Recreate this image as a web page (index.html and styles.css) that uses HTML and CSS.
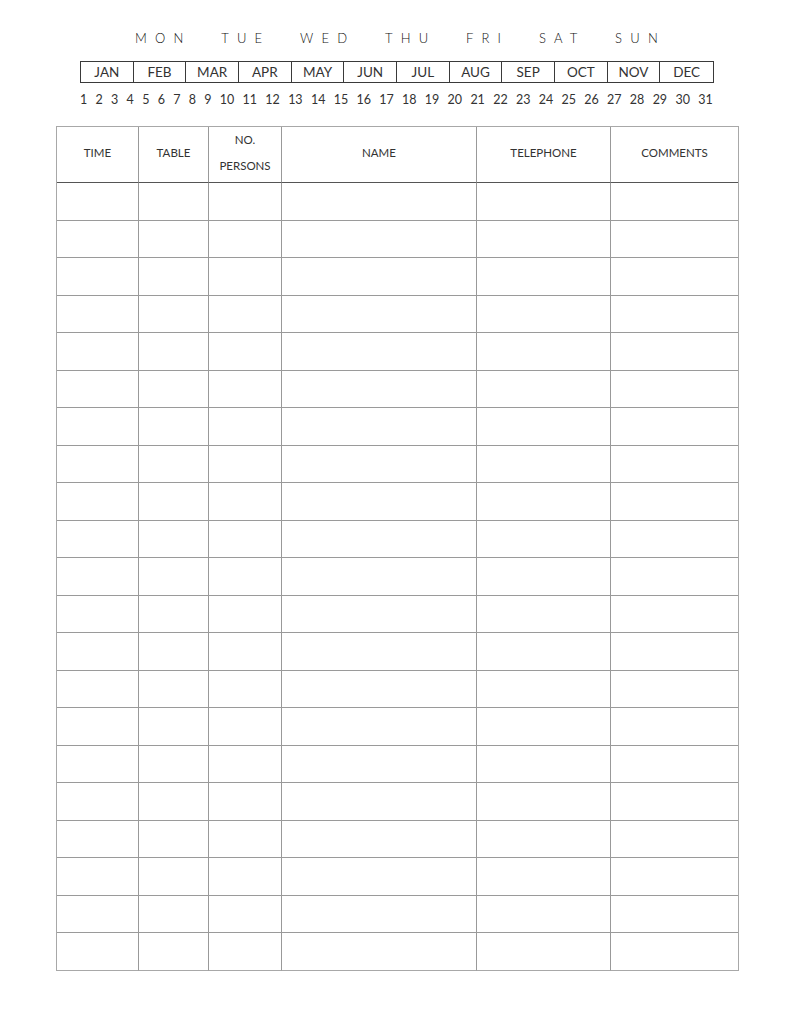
FILE: index.html
```html
<!DOCTYPE html>
<html>
<head>
<meta charset="utf-8">
<link rel="stylesheet" href="styles.css">
</head>
<body>
<div class="page">
  <div class="weekdays">
    <span>MON</span><span>TUE</span><span>WED</span><span>THU</span><span>FRI</span><span>SAT</span><span>SUN</span>
  </div>
  <div class="months">
    <div class="month">JAN</div><div class="month">FEB</div><div class="month">MAR</div><div class="month">APR</div><div class="month">MAY</div><div class="month">JUN</div><div class="month">JUL</div><div class="month">AUG</div><div class="month">SEP</div><div class="month">OCT</div><div class="month">NOV</div><div class="month">DEC</div>
  </div>
  <div class="dates">
    <span>1</span><span>2</span><span>3</span><span>4</span><span>5</span><span>6</span><span>7</span><span>8</span><span>9</span><span>10</span><span>11</span><span>12</span><span>13</span><span>14</span><span>15</span><span>16</span><span>17</span><span>18</span><span>19</span><span>20</span><span>21</span><span>22</span><span>23</span><span>24</span><span>25</span><span>26</span><span>27</span><span>28</span><span>29</span><span>30</span><span>31</span>
  </div>
  <div class="sheet" id="sheet">
    <div class="cell head">TIME</div>
    <div class="cell head">TABLE</div>
    <div class="cell head persons">NO.<br>PERSONS</div>
    <div class="cell head">NAME</div>
    <div class="cell head">TELEPHONE</div>
    <div class="cell head last">COMMENTS</div>
  </div>
</div>
<script>
  var s = document.getElementById('sheet');
  for (var r = 0; r < 21; r++) {
    for (var c = 0; c < 6; c++) {
      var d = document.createElement('div');
      d.className = 'cell' + (c === 5 ? ' last' : '') + (r === 20 ? ' bottom' : '');
      s.appendChild(d);
    }
  }
</script>
</body>
</html>
```
FILE: styles.css
```css
html, body {
  margin: 0;
  padding: 0;
  background: #ffffff;
}
body {
  font-family: "Lato", "Open Sans", sans-serif;
  color: #222222;
}
.page {
  width: 794px;
  height: 1028px;
  padding-top: 30px;
  box-sizing: border-box;
}
.weekdays {
  display: flex;
  justify-content: space-between;
  margin-left: 135px;
  width: 531px;
  font-size: 13px;
  line-height: 16px;
  letter-spacing: 8.2px;
  font-weight: 300;
  color: #111111;
}
.months {
  display: grid;
  grid-template-columns: repeat(12, 1fr);
  margin-left: 80px;
  margin-top: 15px;
  width: 634px;
  height: 22px;
  border: 1px solid #3a3a3a;
  box-sizing: border-box;
}
.month {
  border-right: 1px solid #3a3a3a;
  font-size: 13.5px;
  line-height: 20px;
  font-weight: 400;
  text-align: center;
  color: #333333;
}
.month:last-child {
  border-right: none;
}
.dates {
  display: flex;
  justify-content: space-between;
  margin-left: 80px;
  margin-top: 9px;
  width: 633px;
  font-size: 12.5px;
  line-height: 16px;
  font-weight: 400;
  color: #333333;
}
.sheet {
  display: grid;
  grid-template-columns: 82px 70px 73px 195px 134px 1fr;
  grid-template-rows: 56px;
  grid-auto-rows: 37.5px;
  margin-left: 56px;
  margin-top: 18px;
  width: 683px;
  border: 1px solid #a8a8a8;
  border-bottom: none;
  box-sizing: border-box;
}
.cell {
  border-right: 1px solid #999999;
  border-bottom: 1px solid #9a9a9a;
}
.cell.last {
  border-right: none;
}
.cell.bottom {
  border-bottom: 1px solid #a8a8a8;
}
.head {
  display: flex;
  align-items: center;
  justify-content: center;
  text-align: center;
  font-size: 11.5px;
  line-height: 26px;
  font-weight: 400;
  color: #333333;
  border-bottom: 1.5px solid #555555;
  padding-bottom: 3px;
  box-sizing: border-box;
}
```
